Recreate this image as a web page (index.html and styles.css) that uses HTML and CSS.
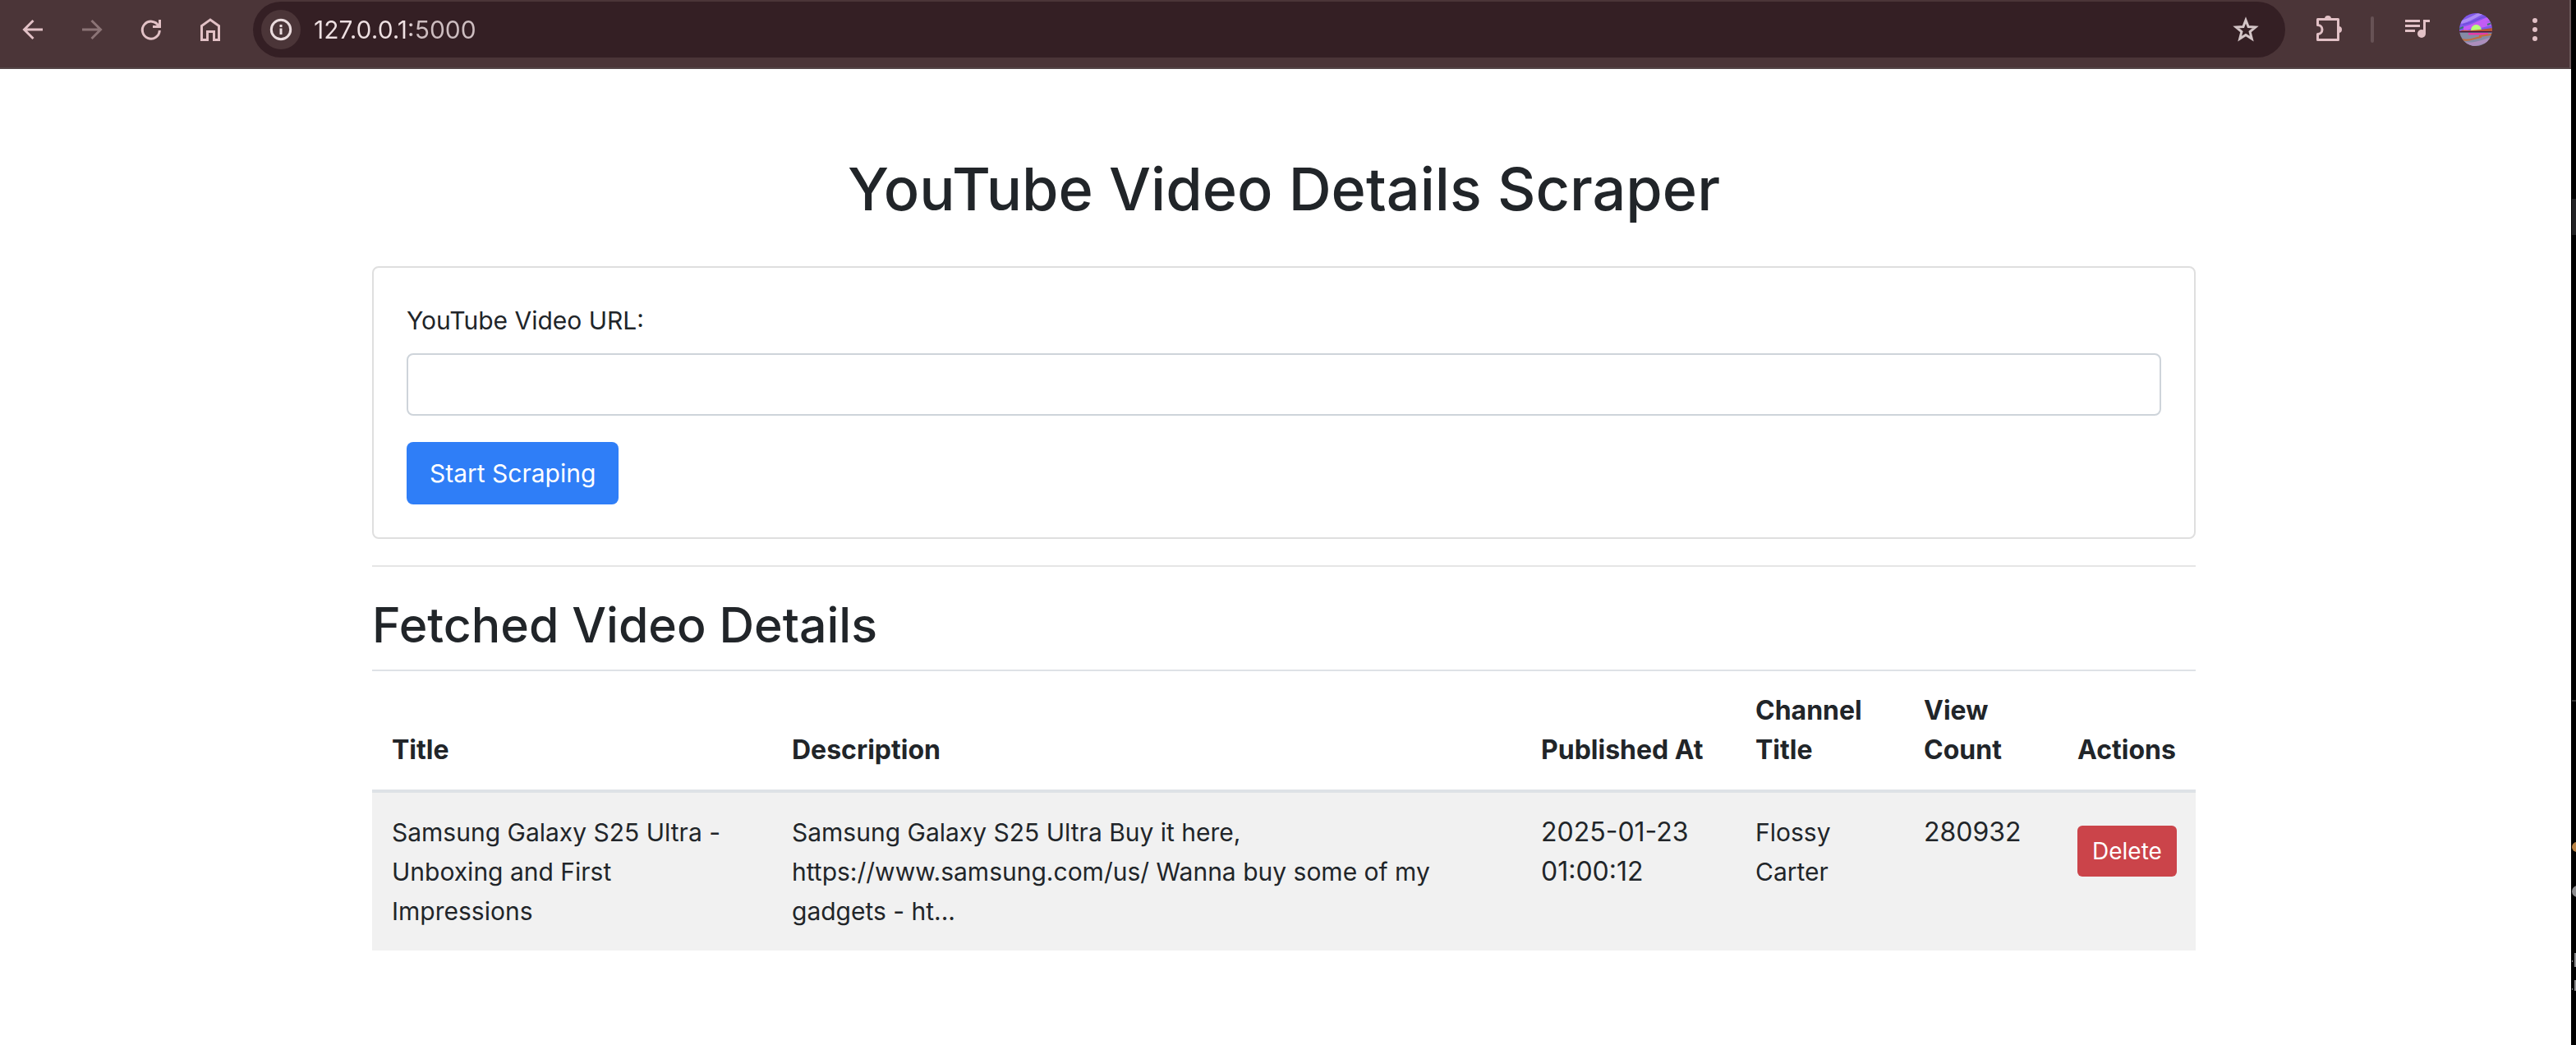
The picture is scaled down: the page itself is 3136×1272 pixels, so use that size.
FILE: index.html
```html
<!DOCTYPE html>
<html lang="en">
<head>
<meta charset="utf-8">
<title>YouTube Video Details Scraper</title>
<link rel="stylesheet" href="styles.css">
</head>
<body>
<div class="window">
  <header class="toolbar">
    <nav class="history">
      <button class="tool" aria-label="Back"><svg viewBox="0 0 32 32"><path d="M28 16H6M16.500 5l-11 11 11 11"/></svg></button>
      <button class="tool tool-off" aria-label="Forward" disabled><svg viewBox="0 0 32 32"><path d="M4 16h22M15.500 5l11 11-11 11"/></svg></button>
      <button class="tool" aria-label="Reload"><svg viewBox="0 0 32 32"><path d="M25 11.500A10.500 10.500 0 1 0 26.300 17M26.500 4v8.500H18"/></svg></button>
      <button class="tool" aria-label="Home"><svg viewBox="0 0 32 32"><path d="M5.500 28.500v-17L16 4l10.500 7.500v17h-6v-10h-8v10z"/></svg></button>
    </nav>
    <div class="omnibox">
      <button class="site-info" aria-label="Site information"><svg viewBox="0 0 32 32"><circle cx="16" cy="16" r="11.700"/><path d="M16 14.500v7.500M16 10v3"/></svg></button>
      <input class="address" type="text" aria-label="Address" value="127.0.0.1:5000">
      <button class="tool star" aria-label="Bookmark"><svg viewBox="0 0 32 32"><path d="M16 4.500l3.100 8.100 8.700.5-6.700 5.500 2.200 8.500L16 22.500l-7.300 4.600 2.200-8.500-6.700-5.500 8.700-.5z"/></svg></button>
    </div>
    <button class="tool" aria-label="Extensions"><svg viewBox="0 0 32 32"><path stroke-linejoin="round" d="M3.500 3.500h25v25h-25v-7a5.500 5.500 0 0 0 0-11z"/><path class="solid" d="M12 3a4 4 0 0 1 8 0zM29 12a4 4 0 0 1 0 8z"/></svg></button>
    <span class="divider"></span>
    <button class="tool" aria-label="Media"><svg viewBox="0 0 32 32"><path d="M2 5.500h18M2 11.500h18M2 17.500h12M25.500 21V5.500H32"/><circle class="solid" cx="22" cy="21" r="5"/></svg></button>
    <button class="tool profile" aria-label="Profile"><svg viewBox="0 0 40 40">
      <defs><clipPath id="face"><circle cx="20" cy="20" r="20"/></clipPath></defs>
      <g clip-path="url(#face)">
        <path class="solid" fill="#8058ea" d="M0 0h40v22H0z"/>
        <path stroke="#ab8cf4" stroke-width="4" d="M2 11C12 9 18 4 27 0"/>
        <path stroke="#c35cf5" stroke-width="5" d="M5 19c10-1 22-10 35-13M24 16l16-4"/>
        <path stroke="#6d46d8" stroke-width="1" d="M4 14c12-2 20-9 32-11"/>
        <path stroke="#347a70" stroke-width="2" d="M0 19l5-2M34 14l6-2"/>
        <path fill="#b8ff78" stroke="none" d="M14 21a6.500 7 0 0 1 13 0z"/>
        <path fill="#b85432" stroke="none" d="M0 22c4-2 8-1 14-1l13-1 13-2v5H0z"/>
        <path fill="#858ba5" stroke="none" d="M0 23h40v17H0z"/>
        <path stroke="#40183f" stroke-width="1.500" d="M0 22.700h40"/>
        <path stroke="#e83ba7" stroke-width="2.500" d="M11 25.200h24"/>
        <path stroke="#c66d3a" stroke-width="2" d="M3 32c10 3 14-2 24-3M24 28l15-2"/>
        <path stroke="#ac8ebc" stroke-width="5" d="M4 37c10 3 22-1 34-5"/>
      </g></svg></button>
    <button class="tool" aria-label="Menu"><svg viewBox="0 0 32 32"><circle class="solid" cx="16" cy="5" r="3"/><circle class="solid" cx="16" cy="16" r="3"/><circle class="solid" cx="16" cy="27" r="3"/></svg></button>
  </header>
  <main class="container">
    <h1 class="page-title">YouTube Video Details Scraper</h1>
    <form class="card">
      <label class="field-label" for="url">YouTube Video URL:</label>
      <input class="field" id="url" type="text">
      <button class="btn btn-primary" type="button">Start Scraping</button>
    </form>
    <hr class="rule">
    <h2 class="section-title">Fetched Video Details</h2>
    <table class="videos">
      <colgroup><col class="col-title"><col><col class="col-date"><col class="col-channel"><col class="col-views"><col class="col-actions"></colgroup>
      <thead><tr><th>Title</th><th>Description</th><th>Published At</th><th>Channel Title</th><th>View Count</th><th>Actions</th></tr></thead>
      <tbody><tr>
        <td>Samsung Galaxy S25 Ultra - Unboxing and First Impressions</td>
        <td>Samsung Galaxy S25 Ultra Buy it here, https://www.samsung.com/us/ Wanna buy some of my gadgets - ht...</td>
        <td class="number">2025-01-23 01:00:12</td><td>Flossy Carter</td><td class="number">280932</td>
        <td><button class="btn btn-danger" type="button">Delete</button></td>
      </tr></tbody>
    </table>
  </main>
</div>
<svg class="desktop-edge" viewBox="0 0 6 1272" aria-hidden="true">
  <path fill="#222224" d="M1 242h5v44H1z"/>
  <path fill="#333" d="M1 852h5v2H1z"/>
  <circle fill="#b98345" cx="7" cy="1031" r="6"/>
  <circle fill="#8c8c8e" cx="8" cy="1085" r="7"/>
  <path fill="#8c8c8e" d="M4 1160h2v17H4zM4 1193h2v13H4zM1 1169h1v2H1zM1 1203h1v2H1z"/>
</svg>
</body>
</html>
```
FILE: styles.css
```css
* { box-sizing: border-box; }
body { display: flex; min-height: 100vh; margin: 0; background: #000; color: #212529; font: 30px/48px Inter, "Liberation Sans", sans-serif; }
button, input { font: inherit; color: inherit; margin: 0; }

.window { flex: 1; background: #fff; }
.desktop-edge { flex: none; align-self: flex-start; width: 6px; }

.toolbar { display: flex; align-items: center; gap: 36px; height: 84px; padding: 2px 26px 12px 24px; background: #4b3538; border-right: 2px solid #6c595b; border-bottom: 2px solid #544547; }
.history { display: flex; gap: 40px; }
.tool { display: flex; flex: none; padding: 0; border: 0; background: none; color: #e2c1c6; }
.tool svg, .site-info svg { width: 32px; height: 32px; overflow: visible; fill: none; stroke: currentColor; stroke-width: 3; }
.tool .solid { stroke: none; }
.tool .solid:not([fill]) { fill: currentColor; }
.tool.profile svg { width: 40px; height: 40px; }
.tool-off { color: #8b7476; }
.star { color: #d3c5c7; }
.omnibox { display: flex; align-items: center; flex: 1; height: 68px; padding: 0 32px 0 10px; border-radius: 34px; background: #341f24; }
.site-info { display: flex; padding: 8px; border: 0; border-radius: 50%; background: #4b3538; color: #ebdcde; }
.address { flex: 1; padding: 0 16px; border: 0; background: linear-gradient(90deg, #eee0e2 134px, #cdbdc0 134px) text; color: transparent; }
.divider { width: 4px; height: 32px; border-radius: 2px; background: #675255; }

.container { max-width: 2224px; margin: 0 auto; padding: 98px 4px 0 0; }
.page-title { margin: 0 0 46px; font-size: 72px; line-height: 96px; font-weight: 500; text-align: center; }
.card { padding: 40px; border: 2px solid #dfdfdf; border-radius: 8px; }
.field-label { display: block; margin-bottom: 16px; }
.field { display: block; width: 100%; height: 76px; margin-bottom: 32px; padding: 12px 24px; border: 2px solid #ced4da; border-radius: 8px; background: #fff; }
.btn { display: block; border: 0; border-radius: 8px; color: #fff; }
.btn-primary { padding: 14px 28px; background: #2f7ef7; }
.btn-danger { margin-top: 16px; padding: 10px 18px; border-radius: 6px; background: #cb444a; font-size: 28px; line-height: 42px; }
.rule { margin: 32px 0; border: 0; border-top: 2px solid #e5e5e5; }
.section-title { margin: 0 0 16px; font-size: 59px; line-height: 77px; font-weight: 500; }

.videos { width: 100%; table-layout: fixed; border-spacing: 0; }
.videos th, .videos td { padding: 24px; text-align: left; vertical-align: top; }
.videos th { border-top: 2px solid #dee2e6; border-bottom: 4px solid #dee2e6; vertical-align: bottom; font-size: 32px; font-weight: 700; }
.videos td { background: #f1f1f1; }
.videos .number { font-size: 32px; }
.videos td:last-child { padding-right: 0; }
.col-title { width: 487px; }
.col-date { width: 261px; }
.col-channel { width: 205px; }
.col-views { width: 187px; }
.col-actions { width: 168px; }
```
